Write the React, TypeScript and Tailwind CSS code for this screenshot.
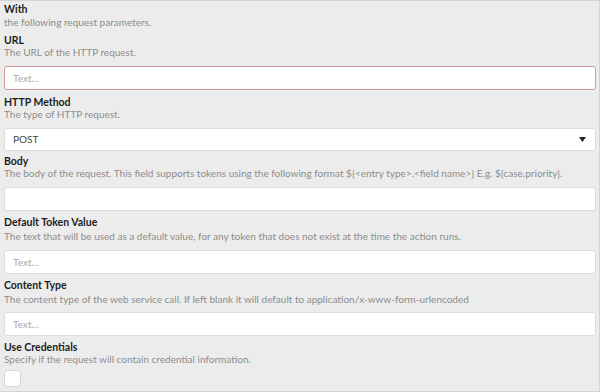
import React from 'react';

type FieldProps = {
  label: string;
  desc: string;
  gap?: string;
  descGap?: string;
  children: React.ReactNode;
};

// one labelled setting row: bold label, grey help text, then the control
function Field({ label, desc, gap = 'mt-[6px]', descGap = 'mt-0', children }: FieldProps) {
  return (
    <div className={gap}>
      <div className="text-[10.5px] leading-[12px] font-bold text-[#1c1c1c]">{label}</div>
      <div className={`text-[10px] leading-[13px] text-[#8c8c8c] ${descGap}`}>{desc}</div>
      {children}
    </div>
  );
}

function TextInput({ invalid = false, placeholder = 'Text...', className = 'mt-[7px]' }: { invalid?: boolean; placeholder?: string; className?: string }) {
  return (
    <input
      type="text"
      placeholder={placeholder}
      className={`${className} block w-full h-[24px] rounded-[3px] bg-white px-[8px] text-[10px] text-[#333] outline-none placeholder:text-[#a9a9a9] border ${
        invalid ? 'border-[#d69a9a]' : 'border-[#dcdcdc]'
      }`}
    />
  );
}

export default function App() {
  return (
    <div
      className="w-[600px] h-[392px] overflow-hidden bg-[#ececec] border-t border-r border-b border-[#d4d4d4] pl-[4px] pr-[3px] pt-[2px]"
      style={{ fontFamily: 'Lato, "Open Sans", sans-serif' }}
    >
      {/* header */}
      <div className="text-[10.5px] leading-[12px] font-bold text-[#1c1c1c]">With</div>
      <div className="mt-[1px] text-[10px] leading-[13px] text-[#8c8c8c]">the following request parameters.</div>

      <Field label="URL" desc="The URL of the HTTP request." gap="mt-[5px]">
        <TextInput invalid />
      </Field>

      <Field label="HTTP Method" desc="The type of HTTP request.">
        <div className="mt-[7px] h-[23px] flex items-center justify-between rounded-[3px] border border-[#dcdcdc] bg-white pl-[8px] pr-[9px]">
          <span className="text-[10px] text-[#444]">POST</span>
          <svg width="7" height="5" viewBox="0 0 7 5">
            <path d="M0 0H7L3.5 5Z" fill="#222" />
          </svg>
        </div>
      </Field>

      <Field
        label="Body"
        desc="The body of the request. This field supports tokens using the following format ${<entry type>.<field name>} E.g. ${case.priority}."
        gap="mt-[4px]"
      >
        <TextInput placeholder="" />
      </Field>

      <Field
        label="Default Token Value"
        desc="The text that will be used as a default value, for any token that does not exist at the time the action runs."
        gap="mt-[5px]"
        descGap="mt-[2px]"
      >
        <TextInput />
      </Field>

      <Field
        label="Content Type"
        desc="The content type of the web service call. If left blank it will default to application/x-www-form-urlencoded"
        gap="mt-[5px]"
        descGap="mt-[2px]"
      >
        <TextInput className="mt-[6px]" />
      </Field>

      <Field label="Use Credentials" desc="Specify if the request will contain credential information." gap="mt-[5px]">
        <div className="mt-[4px] w-[17px] h-[17px] rounded-[4px] border border-[#d6d6d6] bg-white" />
      </Field>
    </div>
  );
}
